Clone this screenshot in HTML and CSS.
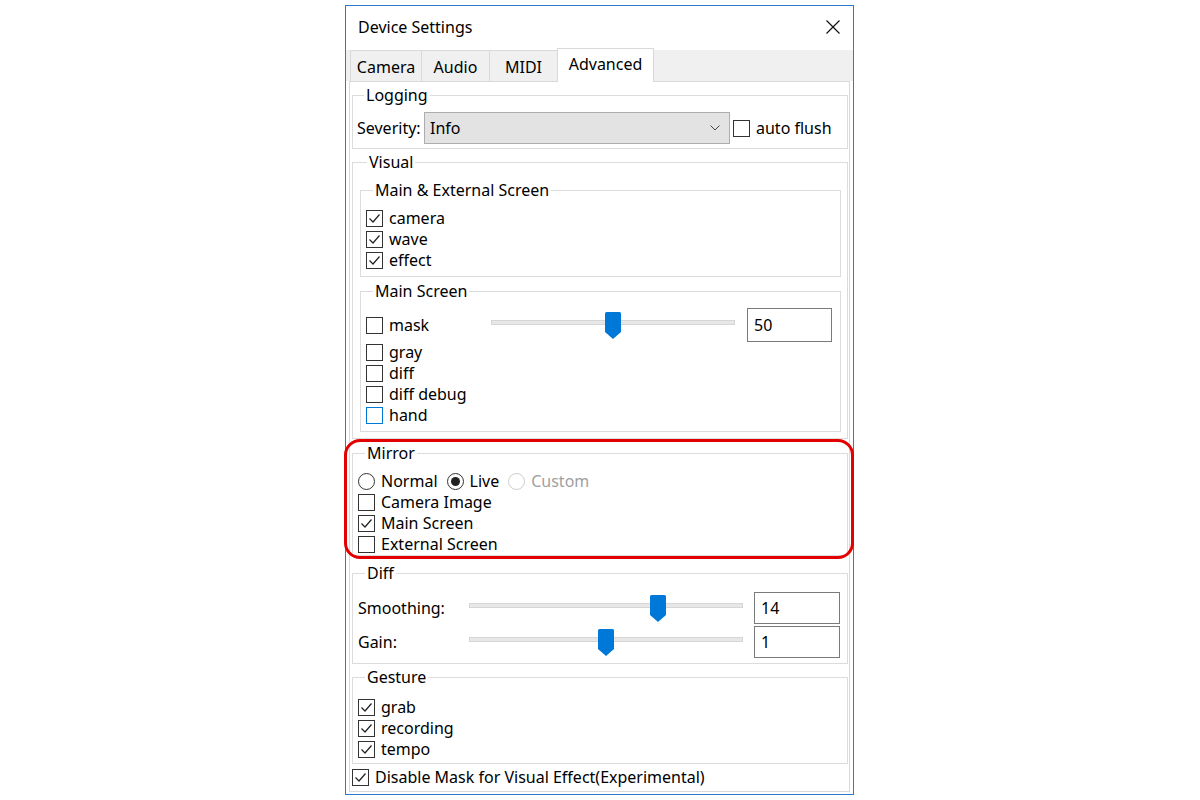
FILE: index.html
```html
<!DOCTYPE html>
<html>
<head>
<meta charset="utf-8">
<title>Device Settings</title>
<link rel="stylesheet" href="styles.css">
</head>
<body>
<div class="stage">
  <div class="window">
    <div class="titlebar">
      <span class="title">Device Settings</span>
      <svg class="close" viewBox="0 0 14 14" width="14" height="14"><path d="M0.5 0.5 L13.5 13.5 M13.5 0.5 L0.5 13.5" stroke="#111" stroke-width="1.2" fill="none"/></svg>
    </div>
    <div class="tabs">
      <div class="tab w-camera">Camera</div>
      <div class="tab w-audio">Audio</div>
      <div class="tab w-midi">MIDI</div>
      <div class="tab active w-adv">Advanced</div>
    </div>
    <div class="panel">
      <fieldset class="group g-logging">
        <legend>Logging</legend>
        <div class="log-row">
          <span class="log-label">Severity:</span>
          <div class="select"><span>Info</span><svg class="chev" viewBox="0 0 10 6" width="10" height="6"><path d="M0.5 0.5 L5 5 L9.5 0.5" stroke="#444" stroke-width="1" fill="none"/></svg></div>
          <div class="crow flush"><span class="cb"></span><span>auto flush</span></div>
        </div>
      </fieldset>

      <fieldset class="group g-visual">
        <legend>Visual</legend>
        <fieldset class="group inner g-mainext">
          <legend>Main &amp; External Screen</legend>
          <div class="rows">
            <div class="crow"><span class="cb on"><svg viewBox="0 0 15 15"><path d="M2.5 7.5 L6 11 L12.5 3.5"/></svg></span><span>camera</span></div>
            <div class="crow"><span class="cb on"><svg viewBox="0 0 15 15"><path d="M2.5 7.5 L6 11 L12.5 3.5"/></svg></span><span>wave</span></div>
            <div class="crow"><span class="cb on"><svg viewBox="0 0 15 15"><path d="M2.5 7.5 L6 11 L12.5 3.5"/></svg></span><span>effect</span></div>
          </div>
        </fieldset>
        <fieldset class="group inner g-main">
          <legend>Main Screen</legend>
          <div class="mask-row">
            <div class="crow mask-label"><span class="cb"></span><span>mask</span></div>
            <div class="slider s-mask" style="--pos:0.5"><div class="track"></div><svg class="thumb" viewBox="0 0 16 27" width="16" height="27"><path d="M0 1.5 Q0 0 1.5 0 H14.5 Q16 0 16 1.5 V20 L8 27 L0 20 Z" fill="#0078d7"/></svg></div>
            <div class="num n-mask">50</div>
          </div>
          <div class="rows tight">
            <div class="crow"><span class="cb"></span><span>gray</span></div>
            <div class="crow"><span class="cb"></span><span>diff</span></div>
            <div class="crow"><span class="cb"></span><span>diff debug</span></div>
            <div class="crow"><span class="cb hover"></span><span>hand</span></div>
          </div>
        </fieldset>
      </fieldset>

      <fieldset class="group g-mirror">
        <legend>Mirror</legend>
        <div class="radio-row">
          <div class="ritem"><span class="rb"></span><span>Normal</span></div>
          <div class="ritem"><span class="rb on"></span><span>Live</span></div>
          <div class="ritem disabled"><span class="rb"></span><span>Custom</span></div>
        </div>
        <div class="rows tight">
          <div class="crow"><span class="cb"></span><span>Camera Image</span></div>
          <div class="crow"><span class="cb on"><svg viewBox="0 0 15 15"><path d="M2.5 7.5 L6 11 L12.5 3.5"/></svg></span><span>Main Screen</span></div>
          <div class="crow"><span class="cb"></span><span>External Screen</span></div>
        </div>
      </fieldset>

      <fieldset class="group g-diff">
        <legend>Diff</legend>
        <div class="diff-row">
          <span class="diff-label">Smoothing:</span>
          <div class="slider s-diff" style="--pos:0.7"><div class="track"></div><svg class="thumb" viewBox="0 0 16 27" width="16" height="27"><path d="M0 1.5 Q0 0 1.5 0 H14.5 Q16 0 16 1.5 V20 L8 27 L0 20 Z" fill="#0078d7"/></svg></div>
          <div class="num n-diff">14</div>
        </div>
        <div class="diff-row second">
          <span class="diff-label">Gain:</span>
          <div class="slider s-diff" style="--pos:0.5"><div class="track"></div><svg class="thumb" viewBox="0 0 16 27" width="16" height="27"><path d="M0 1.5 Q0 0 1.5 0 H14.5 Q16 0 16 1.5 V20 L8 27 L0 20 Z" fill="#0078d7"/></svg></div>
          <div class="num n-diff">1</div>
        </div>
      </fieldset>

      <fieldset class="group g-gesture">
        <legend>Gesture</legend>
        <div class="rows">
          <div class="crow"><span class="cb on"><svg viewBox="0 0 15 15"><path d="M2.5 7.5 L6 11 L12.5 3.5"/></svg></span><span>grab</span></div>
          <div class="crow"><span class="cb on"><svg viewBox="0 0 15 15"><path d="M2.5 7.5 L6 11 L12.5 3.5"/></svg></span><span>recording</span></div>
          <div class="crow"><span class="cb on"><svg viewBox="0 0 15 15"><path d="M2.5 7.5 L6 11 L12.5 3.5"/></svg></span><span>tempo</span></div>
        </div>
      </fieldset>

      <div class="crow disable-row"><span class="cb on"><svg viewBox="0 0 15 15"><path d="M2.5 7.5 L6 11 L12.5 3.5"/></svg></span><span>Disable Mask for Visual Effect(Experimental)</span></div>
    </div>
    <div class="highlight"></div>
  </div>
</div>
</body>
</html>
```

FILE: styles.css
```css
html, body {
  margin: 0;
  padding: 0;
  background: #ffffff;
}
body {
  font-family: "Noto Sans", "Open Sans", "Liberation Sans", sans-serif;
  font-size: 16px;
  color: #000;
}
.stage {
  padding: 5px 0 0 345px;
}
.window {
  position: relative;
  width: 509px;
  height: 790px;
  box-sizing: border-box;
  border: 1px solid #2a7bd0;
  background: #fff;
  display: flex;
  flex-direction: column;
}
.titlebar {
  height: 42px;
  display: flex;
  align-items: center;
  justify-content: space-between;
  padding: 0 13px 0 12px;
}
.title {
  line-height: 20px;
}
.close {
  display: block;
}
.tabs {
  height: 33px;
  display: flex;
  align-items: flex-end;
  padding-left: 4px;
  background: linear-gradient(to bottom, #fff 0, #fff 2px, #f0f0f0 2px);
}
.tab {
  box-sizing: border-box;
  height: 31px;
  border: 1px solid #d9d9d9;
  border-bottom: none;
  margin-right: -1px;
  background: #f0f0f0;
  display: flex;
  align-items: center;
  justify-content: center;
  padding-top: 2px;
  line-height: 20px;
}
.tab.active {
  height: 34px;
  margin-bottom: -1px;
  background: #fff;
  position: relative;
  z-index: 1;
  padding-top: 0;
  padding-bottom: 3px;
}
.w-camera { width: 72px; }
.w-audio { width: 69px; }
.w-midi { width: 69px; }
.w-adv { width: 97px; }
.panel {
  flex: 1;
  border: 1px solid #d9d9d9;
  margin: 0 3px 2px 3px;
  display: flex;
  flex-direction: column;
}
fieldset.group {
  margin: 0 1px 0 2px;
  padding: 0 0 0 5px;
  border: 1px solid #dcdcdc;
  min-width: 0;
}
fieldset.group legend {
  padding: 0 2px;
  margin-left: 7px;
  line-height: 18px;
}
fieldset.group.inner {
  margin: 0;
}
fieldset.g-logging {
  margin-top: 4px;
  padding-bottom: 4px;
  padding-left: 4px;
}
.log-row {
  margin-top: 8px;
  height: 32px;
  display: flex;
  align-items: center;
}
.log-label {
  width: 67px;
  flex: none;
}
.select {
  width: 306px;
  height: 32px;
  box-sizing: border-box;
  background: #e3e3e3;
  border: 1px solid #adadad;
  display: flex;
  align-items: center;
  justify-content: space-between;
  padding: 0 9px 0 5px;
  flex: none;
}
.chev { display: block; }
.flush {
  margin-left: 3px;
}
.crow {
  display: flex;
  align-items: center;
  height: 21px;
  gap: 6px;
  line-height: 21px;
  white-space: nowrap;
}
.cb {
  width: 17px;
  height: 17px;
  box-sizing: border-box;
  border: 1px solid #333;
  background: #fff;
  flex: none;
  display: flex;
  align-items: center;
  justify-content: center;
}
.cb svg {
  width: 15px;
  height: 15px;
  display: block;
}
.cb svg path {
  fill: none;
  stroke: #222;
  stroke-width: 1.2;
}
.cb.hover {
  border-color: #0078d7;
}
fieldset.g-visual {
  margin-top: 4px;
  padding: 0 6px 6px 7px;
}
fieldset.group.g-mainext {
  margin-top: 10px;
  padding-bottom: 5px;
}
.rows {
  margin-top: 9px;
}
.rows.tight {
  margin-top: 0;
}
fieldset.group.g-main {
  margin-top: 5px;
  padding-bottom: 5px;
}
.mask-row {
  margin-top: 8px;
  height: 34px;
  display: flex;
  align-items: center;
}
.mask-label {
  width: 125px;
  flex: none;
}
.slider {
  position: relative;
  height: 27px;
  flex: none;
}
.s-mask { width: 244px; }
.s-diff { width: 274px; }
.track {
  margin-top: 8px;
  height: 5px;
  box-sizing: border-box;
  background: #e7e7e7;
  border: 1px solid #d6d6d6;
}
.thumb {
  position: absolute;
  top: 0;
  left: calc(var(--pos) * (100% - 16px));
  display: block;
}
.num {
  box-sizing: border-box;
  border: 1px solid #7a7a7a;
  display: flex;
  align-items: center;
  padding-left: 6px;
  flex: none;
}
.n-mask {
  width: 85px;
  height: 34px;
  margin-left: 12px;
}
.n-diff {
  width: 86px;
  height: 32px;
  margin-left: 11px;
}
fieldset.g-mirror {
  margin-top: 5px;
  padding-bottom: 0;
}
.radio-row {
  margin-top: 8px;
  height: 22px;
  display: flex;
  align-items: center;
  gap: 9px;
}
.ritem {
  display: flex;
  align-items: center;
  gap: 6px;
  line-height: 22px;
}
.rb {
  width: 17px;
  height: 17px;
  box-sizing: border-box;
  border: 1px solid #333;
  border-radius: 50%;
  display: flex;
  align-items: center;
  justify-content: center;
  flex: none;
}
.rb.on::after {
  content: "";
  width: 9px;
  height: 9px;
  border-radius: 50%;
  background: #222;
}
.ritem.disabled { color: #a0a0a0; }
.ritem.disabled .rb { border-color: #cccccc; }
fieldset.g-diff {
  margin-top: 8px;
  padding-bottom: 5px;
}
.diff-row {
  margin-top: 10px;
  height: 32px;
  display: flex;
  align-items: center;
}
.diff-row.second {
  margin-top: 2px;
}
.diff-label {
  width: 111px;
  flex: none;
}
fieldset.g-gesture {
  margin-top: 4px;
  padding-bottom: 3px;
}
.g-gesture .rows {
  margin-top: 11px;
}
.disable-row {
  margin: 3px 0 0 2px;
}
.highlight {
  position: absolute;
  left: -2px;
  top: 433px;
  width: 510px;
  height: 120px;
  box-sizing: border-box;
  border: 3px solid #e30000;
  border-radius: 16px;
  pointer-events: none;
}
```
